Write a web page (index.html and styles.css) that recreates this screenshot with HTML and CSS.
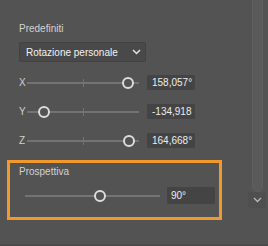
FILE: index.html
```html
<!DOCTYPE html>
<html lang="it">
<head>
    <meta charset="UTF-8">
    <meta name="viewport" content="width=device-width, initial-scale=1.0">
    <title>Rotazione 3D</title>
    <link rel="stylesheet" href="styles.css">
</head>
<body>
    <div class="panel">
        <div class="section">
            <div class="label">Predefiniti</div>
            <div class="dropdown">
                <span>Rotazione personale</span>
                <svg class="chevron" width="9" height="6" viewBox="0 0 9 6"><polyline points="1,1 4.5,4.5 8,1" fill="none" stroke="#e2e2e2" stroke-width="1.5"/></svg>
            </div>

            <div class="axis-rows">
                <div class="axis-row">
                    <span class="axis">X</span>
                    <div class="slider">
                        <div class="tick"></div>
                        <div class="knob" style="left: 90%;"></div>
                    </div>
                    <div class="value">158,057°</div>
                </div>
                <div class="axis-row">
                    <span class="axis">Y</span>
                    <div class="slider">
                        <div class="tick"></div>
                        <div class="knob" style="left: 15.2%;"></div>
                    </div>
                    <div class="value">-134,918</div>
                </div>
                <div class="axis-row">
                    <span class="axis">Z</span>
                    <div class="slider">
                        <div class="tick"></div>
                        <div class="knob" style="left: 91%;"></div>
                    </div>
                    <div class="value">164,668°</div>
                </div>
            </div>
        </div>

        <!-- highlighted perspective block -->
        <div class="perspective">
            <div class="label">Prospettiva</div>
            <div class="persp-row">
                <div class="slider wide">
                    <div class="knob" style="left: 55.6%;"></div>
                </div>
                <div class="value big">90°</div>
            </div>
        </div>
    </div>

    <div class="scrollbar">
        <div class="thumb"></div>
        <div class="arrow">
            <svg width="9" height="6" viewBox="0 0 9 6"><polyline points="1,1 4.5,4.5 8,1" fill="none" stroke="#b8b8b8" stroke-width="1.3"/></svg>
        </div>
    </div>
</body>
</html>
```

FILE: styles.css
```css
body {
    margin: 0;
    width: 268px;
    height: 246px;
    overflow: hidden;
    background-color: #535353;
    font-family: "Liberation Sans", Arial, sans-serif;
    font-size: 10px;
    color: #d4d4d4;
    display: flex;
    border-bottom: 2px solid #4b4b4b;
    box-sizing: border-box;
}

.panel {
    width: 248px;
    padding-left: 7px;
    box-sizing: border-box;
}

.section {
    padding: 23px 0 0 12px;
}

.label {
    line-height: 12px;
    color: #d2d2d2;
}

.dropdown {
    margin-top: 7px;
    width: 127px;
    height: 20px;
    box-sizing: border-box;
    background-color: #494949;
    border: 1px solid #424242;
    border-radius: 2px;
    display: flex;
    align-items: center;
    justify-content: space-between;
    padding: 0 4px 0 6px;
    color: #f2f2f2;
}

.axis-rows {
    margin-top: 6px;
}

.axis-row {
    height: 29px;
    display: flex;
    align-items: center;
}

.axis {
    width: 8px;
    color: #d0d0d0;
}

.slider {
    position: relative;
    width: 112px;
    height: 2px;
    background-color: #737373;
    margin-right: 8px;
}

.slider.wide {
    width: 135px;
    margin-right: 7px;
}

.tick {
    position: absolute;
    left: 50%;
    top: -3px;
    width: 1px;
    height: 8px;
    background-color: #737373;
}

.knob {
    position: absolute;
    top: 1px;
    width: 8px;
    height: 8px;
    margin: -6px 0 0 -6px;
    border: 2px solid #dcdcdc;
    border-radius: 50%;
    background-color: #535353;
}

.value {
    width: 48px;
    height: 15px;
    box-sizing: border-box;
    background-color: #444444;
    border-radius: 1px;
    padding-left: 5px;
    line-height: 15px;
    color: #ececec;
}

.value.big {
    height: 17px;
    line-height: 17px;
    padding-left: 4px;
}

.perspective {
    margin-top: 5px;
    width: 215px;
    height: 60px;
    box-sizing: border-box;
    border: 3px solid #f2992e;
    padding: 3px 0 0 9px;
}

.persp-row {
    margin-top: 9px;
    margin-left: 6px;
    height: 17px;
    display: flex;
    align-items: center;
}

.scrollbar {
    width: 18px;
    display: flex;
    flex-direction: column;
}

.thumb {
    margin-left: 4px;
    width: 11px;
    height: 192px;
    box-sizing: border-box;
    background-color: #5a5a5a;
    border: 1px solid #5f5f5f;
    border-top: none;
    border-radius: 0 0 6px 6px;
}

.arrow {
    height: 16px;
    background-color: #4f4f4f;
    display: flex;
    align-items: center;
    justify-content: center;
    padding-left: 1px;
}
```
